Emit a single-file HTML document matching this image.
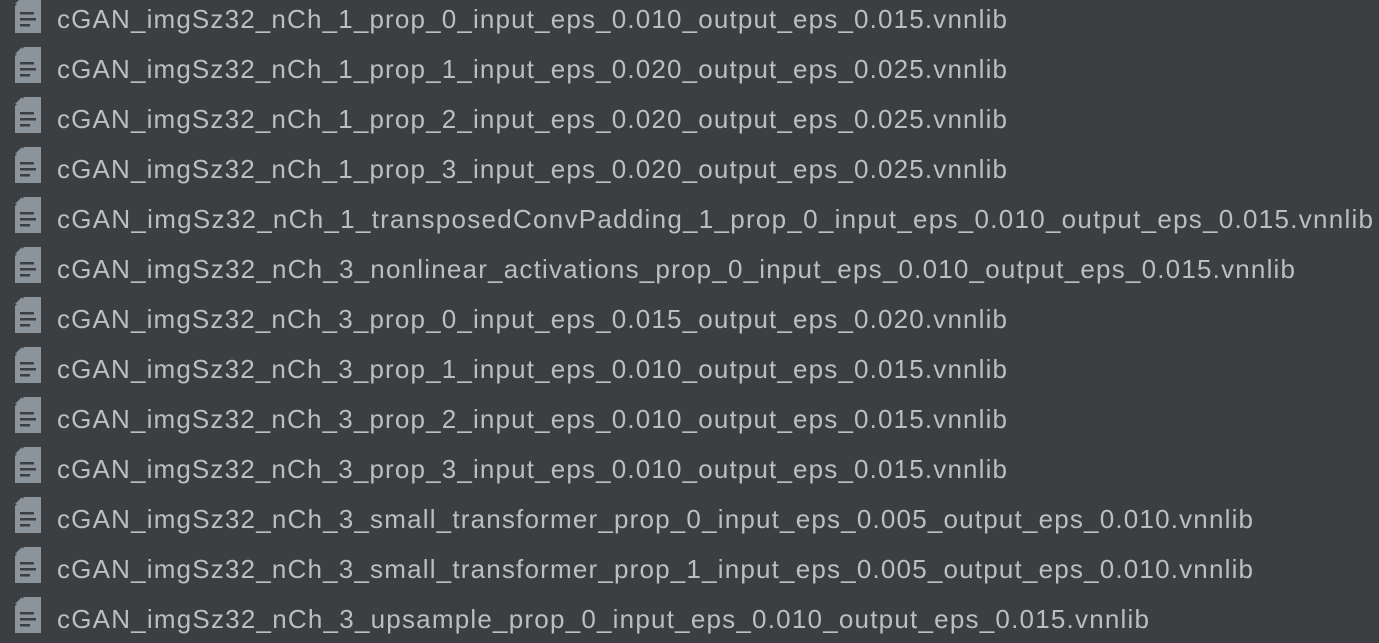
<!DOCTYPE html>
<html><head><meta charset="utf-8"><style>
html,body{margin:0;padding:0;background:#3c3f41;width:1379px;height:643px;overflow:hidden}
svg{display:block}
text{font-family:"Liberation Sans",sans-serif;font-size:26px;fill:#bbbec2}
</style></head><body>
<svg width="1379" height="643" xmlns="http://www.w3.org/2000/svg">
<defs>
<g id="ic">
<path d="M24 0 H41 V36 H15 V9 Z" fill="#8b939b"/>
<path d="M15 7 L22 0 V7 Z" fill="#8b939b"/>
<rect x="20" y="15" width="14" height="2.5" fill="#3c3f41"/>
<rect x="20" y="21" width="16" height="2.5" fill="#3c3f41"/>
<rect x="20" y="27" width="10" height="2.5" fill="#3c3f41"/>
</g>
</defs>
<use href="#ic" y="-3"/><use href="#ic" y="47"/><use href="#ic" y="97"/><use href="#ic" y="147"/><use href="#ic" y="197"/><use href="#ic" y="247"/><use href="#ic" y="297"/><use href="#ic" y="347"/><use href="#ic" y="397"/><use href="#ic" y="447"/><use href="#ic" y="497"/><use href="#ic" y="547"/><use href="#ic" y="597"/>
<text x="57" y="28" textLength="950" lengthAdjust="spacing">cGAN_imgSz32_nCh_1_prop_0_input_eps_0.010_output_eps_0.015.vnnlib</text>
<text x="57" y="78" textLength="950" lengthAdjust="spacing">cGAN_imgSz32_nCh_1_prop_1_input_eps_0.020_output_eps_0.025.vnnlib</text>
<text x="57" y="128" textLength="950" lengthAdjust="spacing">cGAN_imgSz32_nCh_1_prop_2_input_eps_0.020_output_eps_0.025.vnnlib</text>
<text x="57" y="178" textLength="950" lengthAdjust="spacing">cGAN_imgSz32_nCh_1_prop_3_input_eps_0.020_output_eps_0.025.vnnlib</text>
<text x="57" y="228" textLength="1316" lengthAdjust="spacing">cGAN_imgSz32_nCh_1_transposedConvPadding_1_prop_0_input_eps_0.010_output_eps_0.015.vnnlib</text>
<text x="57" y="278" textLength="1238" lengthAdjust="spacing">cGAN_imgSz32_nCh_3_nonlinear_activations_prop_0_input_eps_0.010_output_eps_0.015.vnnlib</text>
<text x="57" y="328" textLength="950" lengthAdjust="spacing">cGAN_imgSz32_nCh_3_prop_0_input_eps_0.015_output_eps_0.020.vnnlib</text>
<text x="57" y="378" textLength="950" lengthAdjust="spacing">cGAN_imgSz32_nCh_3_prop_1_input_eps_0.010_output_eps_0.015.vnnlib</text>
<text x="57" y="428" textLength="950" lengthAdjust="spacing">cGAN_imgSz32_nCh_3_prop_2_input_eps_0.010_output_eps_0.015.vnnlib</text>
<text x="57" y="478" textLength="950" lengthAdjust="spacing">cGAN_imgSz32_nCh_3_prop_3_input_eps_0.010_output_eps_0.015.vnnlib</text>
<text x="57" y="528" textLength="1196" lengthAdjust="spacing">cGAN_imgSz32_nCh_3_small_transformer_prop_0_input_eps_0.005_output_eps_0.010.vnnlib</text>
<text x="57" y="578" textLength="1196" lengthAdjust="spacing">cGAN_imgSz32_nCh_3_small_transformer_prop_1_input_eps_0.005_output_eps_0.010.vnnlib</text>
<text x="57" y="628" textLength="1092" lengthAdjust="spacing">cGAN_imgSz32_nCh_3_upsample_prop_0_input_eps_0.010_output_eps_0.015.vnnlib</text>
</svg>
</body></html>
